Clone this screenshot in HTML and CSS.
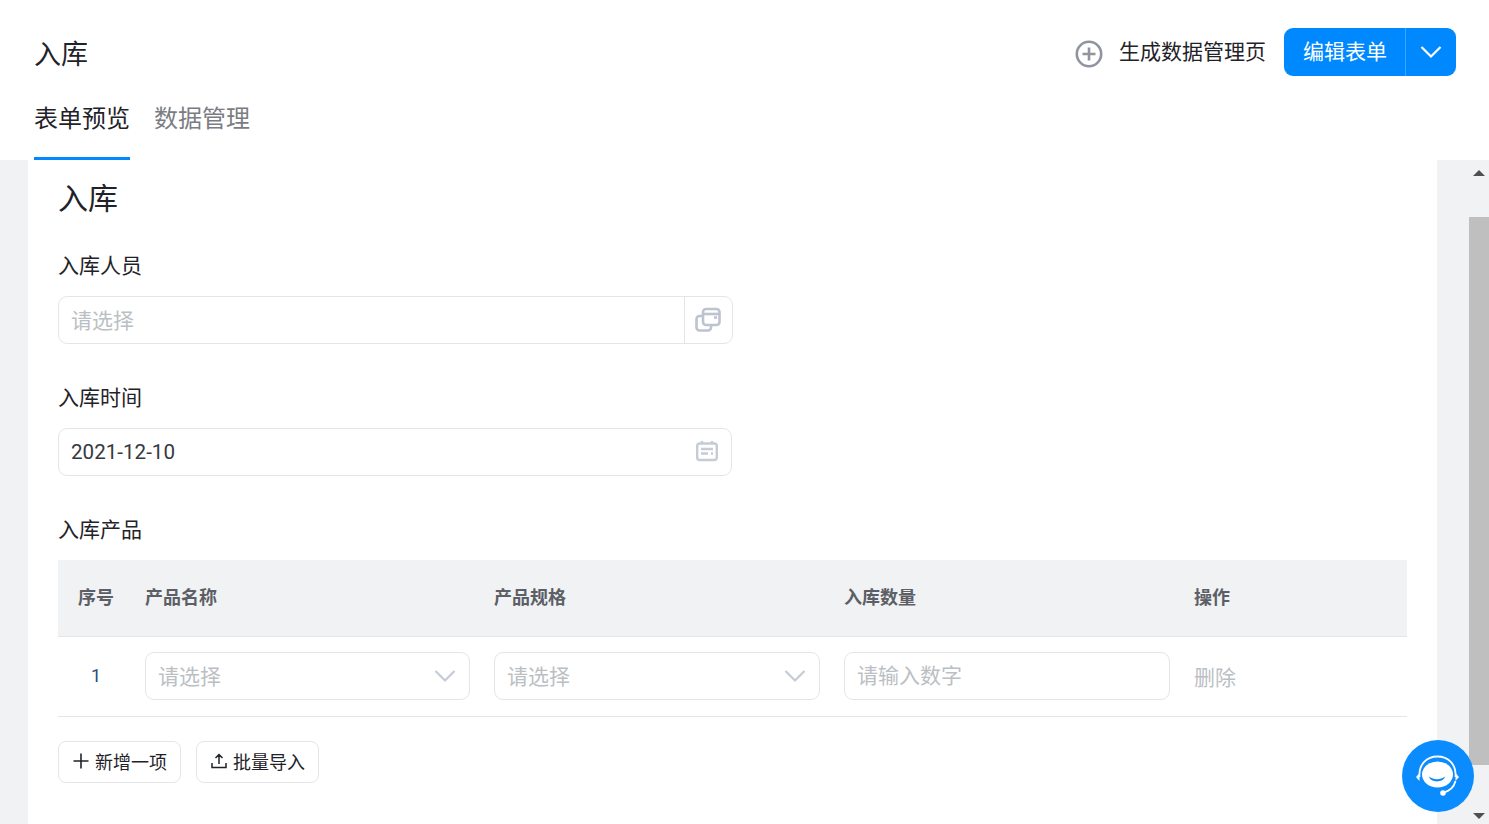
FILE: index.html
```html
<!DOCTYPE html>
<html lang="zh-CN">
<head>
<meta charset="utf-8">
<title>入库</title>
<link rel="stylesheet" href="styles.css">
</head>
<body>
<div class="page">
  <header class="top">
    <div class="top-row">
      <h1 class="page-title">入库</h1>
      <div class="actions">
        <svg class="plus-circle" width="28" height="28" viewBox="0 0 28 28" fill="none" stroke="#8f959e" stroke-width="2.6"><circle cx="14" cy="14" r="12.200"/><path d="M14 7.500v13M7.500 14h13"/></svg>
        <span class="gen-link">生成数据管理页</span>
        <div class="split-btn">
          <span class="split-main">编辑表单</span>
          <span class="split-arrow"><svg width="22" height="14" viewBox="0 0 22 14" fill="none" stroke="#fff" stroke-width="2.2"><path d="M1.500 2l9.500 9.500L20.500 2"/></svg></span>
        </div>
      </div>
    </div>
    <nav class="tabs">
      <span class="tab active">表单预览</span>
      <span class="tab">数据管理</span>
    </nav>
  </header>
  <div class="content">
    <main class="card">
      <h2 class="form-title">入库</h2>
      <div class="field">
        <div class="label">入库人员</div>
        <div class="input picker">
          <span class="input-text placeholder">请选择</span>
          <span class="addon">
            <svg width="26" height="26" viewBox="0 0 26 26" fill="none" stroke="#bcc4cf" stroke-width="2.6"><path d="M8 9H4.500A3 3 0 0 0 1.500 12v8.500a3 3 0 0 0 3 3H13a3 3 0 0 0 3-3V18"/><rect x="8" y="2" width="16.500" height="16" rx="3"/><path d="M8 7h16.500"/><path d="M19 10.500h3"/></svg>
          </span>
        </div>
      </div>
      <div class="field">
        <div class="label">入库时间</div>
        <div class="input date">
          <span class="input-text">2021-12-10</span>
          <svg class="date-icon" width="22" height="22" viewBox="0 0 22 22" fill="none" stroke="#c5ccd6" stroke-width="2.4"><rect x="1.200" y="3.500" width="19.600" height="16.500" rx="2.500"/><path d="M6 1v3M16 1v3M5 9h12M5 13.500h7M15 13.500h2"/></svg>
        </div>
      </div>
      <div class="label">入库产品</div>
      <div class="table">
        <div class="tr head">
          <div class="th seq">序号</div>
          <div class="th">产品名称</div>
          <div class="th">产品规格</div>
          <div class="th">入库数量</div>
          <div class="th">操作</div>
        </div>
        <div class="tr body-row">
          <div class="td num">1</div>
          <div class="td"><div class="input select"><span class="input-text placeholder">请选择</span><svg width="22" height="14" viewBox="0 0 22 14" fill="none" stroke="#c5ccd6" stroke-width="2.2"><path d="M1.500 2l9.500 9.500L20.500 2"/></svg></div></div>
          <div class="td"><div class="input select"><span class="input-text placeholder">请选择</span><svg width="22" height="14" viewBox="0 0 22 14" fill="none" stroke="#c5ccd6" stroke-width="2.2"><path d="M1.500 2l9.500 9.500L20.500 2"/></svg></div></div>
          <div class="td"><div class="input"><span class="input-text placeholder number-hint">请输入数字</span></div></div>
          <div class="td del">删除</div>
        </div>
      </div>
      <div class="tools">
        <button class="tool add"><svg width="18" height="18" viewBox="0 0 18 18" fill="none" stroke="#1f2329" stroke-width="1.600"><path d="M9 1.500v15M1.500 9h15"/></svg>新增一项</button>
        <button class="tool upload"><svg width="16" height="16" viewBox="0 0 16 16" fill="none" stroke="#1f2329" stroke-width="1.500"><path d="M1 10v4.500h14V10M8 11V2M4.500 5L8 1.500 11.500 5"/></svg>批量导入</button>
      </div>
    </main>
    <aside class="scrollbar">
      <span class="arrow up"></span>
      <span class="thumb"></span>
      <span class="arrow down"></span>
    </aside>
  </div>
  <div class="help">
    <svg width="46" height="46" viewBox="0 0 46 46" fill="none">
      <path d="M4.500 24C3.500 11 12 3.500 22.500 3.500S41.500 11 40.500 24" stroke="#fff" stroke-width="1.800"/>
      <ellipse cx="22.500" cy="21.500" rx="15.500" ry="13" fill="#fff"/>
      <path d="M14 23.500c5 3.500 11 3.500 16 0-1.500 6.500-14.500 6.500-16 0z" fill="#0a8cff"/>
      <path d="M1 24l3.500-4v8zM44 24l-3.500-4v8z" fill="#fff"/>
      <path d="M40.500 28c-1.500 6-6 10-12 11.500" stroke="#fff" stroke-width="1.800"/>
      <circle cx="28" cy="40" r="2.800" fill="#fff"/>
    </svg>
  </div>
</div>
</body>
</html>
```
FILE: styles.css
```css
* { box-sizing: border-box; }
html, body { margin: 0; padding: 0; }
body {
  font-family: Roboto, "Noto Sans CJK SC", sans-serif;
  color: #1f2329;
  background: #fff;
  overflow: hidden;
}
.page { position: relative; width: 1489px; height: 824px; overflow: hidden; display: flex; flex-direction: column; }
.top { height: 160px; padding: 28px 33px 0 34px; background: #fff; flex: none; }
.top-row { display: flex; justify-content: space-between; align-items: center; height: 48px; }
.page-title { margin: 0; font-size: 27px; font-weight: 400; line-height: 54px; height: 48px; }
.actions { display: flex; align-items: center; }
.plus-circle { margin-top: 3px; margin-right: 16px; }
.gen-link { font-size: 21px; margin-right: 18px; line-height: 50px; }
.split-btn { display: flex; width: 172px; height: 48px; border-radius: 9px; background: #0089ff; color: #fff; overflow: hidden; }
.split-main { width: 122px; border-right: 1px solid #3fa6ff; padding-left: 19px; font-size: 21px; line-height: 48px; }
.split-arrow { flex: 1; display: flex; align-items: center; justify-content: center; padding: 0 1px 1px 0; }
.tabs { display: flex; gap: 24px; margin-top: 13px; }
.tab { font-size: 24px; height: 71px; padding-top: 12px; line-height: 36px; color: #7a7d82; }
.tab.active { color: #1f2329; border-bottom: 3px solid #0089ff; }
.content { flex: 1; min-height: 0; display: flex; background: #f1f2f4; padding-left: 28px; }
.card { width: 1409px; background: #fff; padding: 17px 30px 0; margin-right: 32px; }
.form-title { margin: 0 0 27px; font-size: 30px; font-weight: 400; line-height: 44px; height: 46px; }
.field { height: 132px; }
.label { font-size: 21px; line-height: 32px; height: 32px; margin-bottom: 14px; }
.input { display: flex; align-items: center; height: 48px; border: 1px solid #e3e5e8; border-radius: 9px; background: #fff; }
.input-text { flex: 1; padding-left: 12px; font-size: 21px; line-height: 46px; }
.placeholder { color: #bbbfc4; padding-top: 2px; line-height: 44px; }
.number-hint { padding-top: 0; line-height: 44px; }
.picker { width: 675px; }
.addon { width: 48px; height: 46px; border-left: 1px solid #e3e5e8; display: flex; align-items: center; justify-content: center; padding-right: 2px; }
.date { width: 674px; }
.date .input-text { font-size: 20.600px; color: #35393f; }
.date-icon { margin-right: 13px; margin-bottom: 2px; }
.select svg { margin-right: 13px; }
.table { width: 1349px; margin-top: 14px; }
.tr { display: grid; grid-template-columns: 87px 349px 350px 350px 1fr; }
.head { height: 77px; background: #f1f2f4; border-bottom: 1px solid #e3e5e8; align-items: center; }
.th { font-size: 18px; font-weight: 700; color: #5c5f65; padding-bottom: 4px; }
.th.seq { padding-left: 20px; }
.body-row { height: 80px; border-bottom: 1px solid #e3e5e8; align-items: center; padding-bottom: 2px; }
.td > .input { width: calc(100% - 24px); }
.num { font-size: 18px; padding-left: 33px; color: #1f4f7a; }
.del { font-size: 21px; color: #bbbfc4; }
.tools { display: flex; gap: 15px; margin-top: 24px; }
.tool { display: flex; align-items: center; width: 123px; height: 42px; padding: 0 0 2px 14px; border: 1px solid #e3e5e8; border-radius: 8px; background: #fff; font: 18px Roboto, "Noto Sans CJK SC", sans-serif; color: #1f2329; }
.tool.add { gap: 5px; padding-left: 13px; }
.tool.upload { gap: 6px; }
.scrollbar { width: 20px; flex: none; background: #f1f2f4; position: relative; display: flex; flex-direction: column; align-items: center; }
.thumb { width: 20px; height: 548px; margin-top: 57px; background: #bfbfbf; }
.arrow { position: absolute; width: 0; height: 0; border-left: 6px solid transparent; border-right: 6px solid transparent; }
.arrow.up { top: 10px; border-bottom: 6px solid #505050; }
.arrow.down { bottom: 5px; border-top: 6px solid #505050; }
.help { position: absolute; left: 1402px; top: 740px; width: 72px; height: 72px; border-radius: 50%; background: #0a8cff; display: flex; align-items: center; justify-content: center; }
```
